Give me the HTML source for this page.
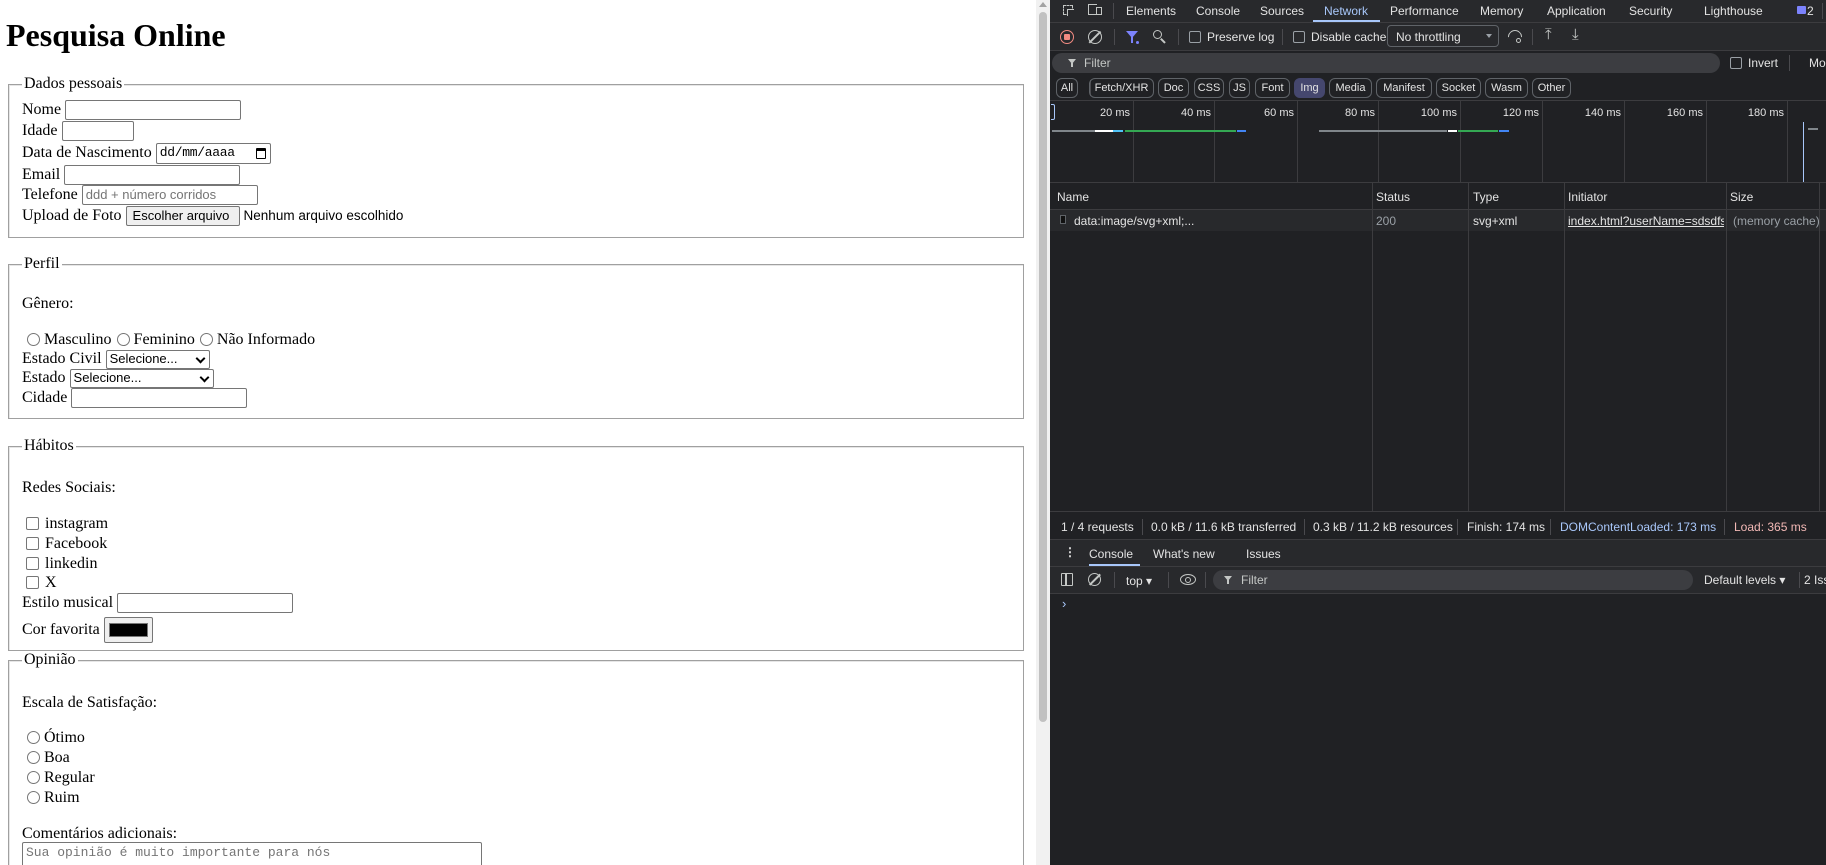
<!DOCTYPE html>
<html><head><meta charset="utf-8">
<style>
*{box-sizing:border-box}
html,body{margin:0;padding:0;width:1826px;height:865px;overflow:hidden;background:#fff}
.a{position:absolute}
#page{position:absolute;left:0;top:0;width:1036px;height:865px;background:#fff;font-family:"Liberation Serif",serif;font-size:16px;color:#000;overflow:hidden}
h1{position:absolute;left:6px;top:17px;margin:0;font-size:32px;font-weight:bold;line-height:37px}
.fs{position:absolute;left:8px;width:1016px;border:1px solid #a0a0a0;box-shadow:inset 1px 1px 0 #e6e6e6}
.lg{position:absolute;left:22px;background:#fff;padding:0 2px;line-height:18px;white-space:nowrap}
.row{position:absolute;left:22px;height:22px;display:flex;align-items:center;white-space:nowrap;line-height:18px;margin-top:1px}
.inp{display:inline-block;border:1px solid #767676;border-radius:2px;height:20px;margin-left:4px;background:#fff;font-family:"Liberation Sans",sans-serif;font-size:13px;color:#757575;padding:1px 3px;line-height:16px}
.btn{display:inline-block;border:1px solid #767676;border-radius:2px;background:#efefef;height:20px;font-family:"Liberation Sans",sans-serif;font-size:13px;color:#000;padding:1px 6px;line-height:16px;margin-left:4px}
.sel{display:inline-block;border:1px solid #767676;border-radius:2px;height:19px;margin-left:4px;font-family:"Liberation Sans",sans-serif;font-size:13px;color:#000;padding:0 3px;line-height:16px;position:relative}
.sel:after{content:"";position:absolute;right:5px;top:4px;width:5px;height:5px;border-right:2px solid #000;border-bottom:2px solid #000;transform:rotate(45deg)}
.rad{display:inline-block;width:13px;height:13px;border:1px solid #767676;border-radius:50%;margin:0 4px 0 5px;position:relative;top:-1px}
.chk{display:inline-block;width:13px;height:13px;border:1px solid #767676;border-radius:2px;margin:0 6px 0 4px;position:relative;top:-1px}
#dt{position:absolute;left:1050px;top:0;width:776px;height:865px;background:#202124;font-family:"Liberation Sans",sans-serif;font-size:12px;color:#e3e3e3;overflow:hidden}
#sb{position:absolute;left:1036px;top:0;width:14px;height:865px;background:#f1f1f1}
.t{position:absolute;white-space:nowrap;line-height:14px}
.hl{position:absolute;height:1px;background:#3c3c3f}
.vl{position:absolute;width:1px;background:#3c3c3f}
.chip{position:absolute;top:78px;height:20px;border:1px solid #5f6368;border-radius:6px;font-size:11px;line-height:18px;text-align:center;color:#e3e3e3}
.cb{position:absolute;width:12px;height:12px;border:1px solid #9aa0a6;border-radius:2px}
.sep{position:absolute;width:1px;height:16px;background:#4a4a4e}
</style></head><body>
<div id="page">
<h1>Pesquisa Online</h1>

<div class="fs" style="top:84px;height:154px"></div>
<div class="lg" style="top:75px">Dados pessoais</div>
<div class="row" style="top:98px">Nome<span class="inp" style="width:176px"></span></div>
<div class="row" style="top:119px">Idade<span class="inp" style="width:72px"></span></div>
<div class="row" style="top:141px">Data de Nascimento<span class="inp" style="width:115px;height:21px;color:#000;font-family:'Liberation Mono',monospace;font-size:13px;position:relative;letter-spacing:-0.3px">dd/mm/aaaa<span style="position:absolute;right:4px;top:4px;width:10px;height:11px;border:1.5px solid #000;border-top-width:3px;border-radius:1px"></span></span></div>
<div class="row" style="top:163px">Email<span class="inp" style="width:176px"></span></div>
<div class="row" style="top:183px">Telefone<span class="inp" style="width:176px">ddd + número corridos</span></div>
<div class="row" style="top:204px">Upload de Foto<span class="btn" style="width:114px">Escolher arquivo</span><span style="font-family:'Liberation Sans',sans-serif;font-size:13.5px;margin-left:4px">Nenhum arquivo escolhido</span></div>

<div class="fs" style="top:264px;height:155px"></div>
<div class="lg" style="top:255px">Perfil</div>
<div class="row" style="top:292px">Gênero:</div>
<div class="row" style="top:328px"><span class="rad" style="margin-left:5px"></span>Masculino<span class="rad"></span>Feminino<span class="rad"></span>Não Informado</div>
<div class="row" style="top:347px">Estado Civil<span class="sel" style="width:104px">Selecione...</span></div>
<div class="row" style="top:366px">Estado<span class="sel" style="width:144px">Selecione...</span></div>
<div class="row" style="top:386px">Cidade<span class="inp" style="width:176px"></span></div>

<div class="fs" style="top:446px;height:205px"></div>
<div class="lg" style="top:437px">Hábitos</div>
<div class="row" style="top:476px">Redes Sociais:</div>
<div class="row" style="top:512px"><span class="chk"></span>instagram</div>
<div class="row" style="top:532px"><span class="chk"></span>Facebook</div>
<div class="row" style="top:552px"><span class="chk"></span>linkedin</div>
<div class="row" style="top:571px"><span class="chk"></span>X</div>
<div class="row" style="top:591px">Estilo musical<span class="inp" style="width:176px"></span></div>
<div class="row" style="top:616px;height:26px">Cor favorita<span style="display:inline-block;margin-left:4px;width:49px;height:26px;border:1px solid #767676;border-radius:2px;background:#efefef;padding:5px 4px"><span style="display:block;height:14px;background:#000;border:1px solid #777"></span></span></div>

<div class="fs" style="top:660px;height:230px"></div>
<div class="lg" style="top:651px">Opinião</div>
<div class="row" style="top:691px">Escala de Satisfação:</div>
<div class="row" style="top:726px"><span class="rad"></span>Ótimo</div>
<div class="row" style="top:746px"><span class="rad"></span>Boa</div>
<div class="row" style="top:766px"><span class="rad"></span>Regular</div>
<div class="row" style="top:786px"><span class="rad"></span>Ruim</div>
<div class="row" style="top:822px">Comentários adicionais:</div>
<div class="a" style="left:22px;top:842px;width:460px;height:40px;border:1px solid #767676;border-radius:2px;font-family:'Liberation Mono',monospace;font-size:13px;color:#757575;padding:2px 3px">Sua opinião é muito importante para nós</div>
</div>

<div id="sb"><div class="a" style="left:3px;top:2px;width:0;height:0;border-left:4px solid transparent;border-right:4px solid transparent;border-bottom:5px solid #a3a3a3"></div><div class="a" style="left:3px;top:12px;width:8px;height:710px;background:#c1c1c1;border-radius:4px"></div></div>

<div id="dt">
<div class="a" style="left:0;top:0;width:776px;height:22px;background:#28292c"></div>
<div class="hl" style="left:0;top:22px;width:776px"></div>
<div class="a" style="left:13px;top:5px;width:10px;height:10px;border:1px dashed #c4c7c5"></div>
<div class="a" style="left:17px;top:9px;width:7px;height:7px;border-left:1.5px solid #c4c7c5;border-top:1.5px solid #c4c7c5;background:#28292c"></div>
<div class="a" style="left:38px;top:4px;width:9px;height:11px;border:1.5px solid #c4c7c5;border-right:none"></div>
<div class="a" style="left:46px;top:7px;width:6px;height:8px;border:1.5px solid #c4c7c5"></div>
<div class="sep" style="left:63px;top:3px"></div>
<div class="t" style="left:76px;top:4px">Elements</div>
<div class="t" style="left:146px;top:4px">Console</div>
<div class="t" style="left:210px;top:4px">Sources</div>
<div class="t" style="left:274px;top:4px;color:#a8c7fa">Network</div>
<div class="a" style="left:263px;top:20px;width:67px;height:2px;background:#a8c7fa"></div>
<div class="t" style="left:340px;top:4px">Performance</div>
<div class="t" style="left:430px;top:4px">Memory</div>
<div class="t" style="left:497px;top:4px">Application</div>
<div class="t" style="left:579px;top:4px">Security</div>
<div class="t" style="left:654px;top:4px">Lighthouse</div>
<div class="a" style="left:747px;top:6px;width:9px;height:8px;background:#7c83fd;border-radius:1px"></div>
<div class="t" style="left:757px;top:4px">2</div>
<div class="sep" style="left:772px;top:3px"></div>
<div class="a" style="left:0;top:23px;width:776px;height:28px;background:#28292c"></div>
<div class="hl" style="left:0;top:50px;width:776px"></div>
<div class="a" style="left:10px;top:30px;width:14px;height:14px;border:1.5px solid #f28b82;border-radius:50%"></div>
<div class="a" style="left:14px;top:34px;width:6px;height:6px;background:#f28b82;border-radius:1px"></div>
<div class="a" style="left:38px;top:30px;width:14px;height:14px;border:1.5px solid #c4c7c5;border-radius:50%"></div>
<div class="a" style="left:44px;top:29px;width:1.5px;height:16px;background:#c4c7c5;transform:rotate(45deg)"></div>
<div class="sep" style="left:64px;top:29px"></div>
<div class="a" style="left:76px;top:31px;width:0;height:0;border-left:6px solid transparent;border-right:6px solid transparent;border-top:7px solid #7c83fd"></div>
<div class="a" style="left:81px;top:37px;width:2px;height:6px;background:#7c83fd"></div>
<div class="a" style="left:86px;top:41px;width:3px;height:3px;background:#7c83fd;border-radius:50%"></div>
<div class="a" style="left:103px;top:30px;width:9px;height:9px;border:1.5px solid #c4c7c5;border-radius:50%"></div>
<div class="a" style="left:112px;top:38px;width:1.5px;height:6px;background:#c4c7c5;transform:rotate(-45deg)"></div>
<div class="sep" style="left:128px;top:29px"></div>
<div class="cb" style="left:139px;top:31px"></div>
<div class="t" style="left:157px;top:30px">Preserve log</div>
<div class="sep" style="left:232px;top:29px"></div>
<div class="cb" style="left:243px;top:31px"></div>
<div class="t" style="left:261px;top:30px">Disable cache</div>
<div class="a" style="left:337px;top:25px;width:112px;height:22px;border:1px solid #5f6368;border-radius:4px"></div>
<div class="t" style="left:346px;top:30px">No throttling</div>
<div class="a" style="left:436px;top:34px;border-left:3.5px solid transparent;border-right:3.5px solid transparent;border-top:4px solid #9aa0a6"></div>
<div class="a" style="left:458px;top:30px;width:14px;height:14px;border:1.5px solid #c4c7c5;border-radius:50%;border-bottom-color:transparent;border-left-color:transparent;transform:rotate(-45deg)"></div>
<div class="a" style="left:466px;top:38px;width:5px;height:5px;border:1.5px solid #c4c7c5;border-radius:50%"></div>
<div class="sep" style="left:482px;top:29px"></div>
<div class="t" style="left:495px;top:28px;font-size:15px;color:#c4c7c5">⤒</div>
<div class="t" style="left:522px;top:28px;font-size:15px;color:#c4c7c5">⤓</div>
<div class="a" style="left:2px;top:53px;width:668px;height:20px;background:#3c3d41;border-radius:10px"></div>
<div class="a" style="left:18px;top:59px;border-left:4px solid transparent;border-right:4px solid transparent;border-top:5px solid #c4c7c5"></div>
<div class="a" style="left:21px;top:63px;width:1.5px;height:4px;background:#c4c7c5"></div>
<div class="t" style="left:34px;top:56px;color:#c4c7c5">Filter</div>
<div class="cb" style="left:680px;top:57px"></div>
<div class="t" style="left:698px;top:56px">Invert</div>
<div class="sep" style="left:739px;top:55px"></div>
<div class="t" style="left:759px;top:56px">Mo</div>
<div class="chip" style="left:6px;width:22px">All</div>
<div class="sep" style="left:40px;top:80px"></div>
<div class="chip" style="left:39px;width:65px">Fetch/XHR</div>
<div class="chip" style="left:108px;width:31px">Doc</div>
<div class="chip" style="left:144px;width:30px">CSS</div>
<div class="chip" style="left:179px;width:21px">JS</div>
<div class="chip" style="left:205px;width:35px">Font</div>
<div class="chip" style="left:244px;width:31px;background:#45476e;border-color:#45476e">Img</div>
<div class="chip" style="left:279px;width:43px">Media</div>
<div class="chip" style="left:326px;width:56px">Manifest</div>
<div class="chip" style="left:386px;width:45px">Socket</div>
<div class="chip" style="left:435px;width:43px">Wasm</div>
<div class="chip" style="left:482px;width:39px">Other</div>
<div class="hl" style="left:0;top:100px;width:776px"></div>
<div class="vl" style="left:83px;top:101px;height:81px"></div>
<div class="vl" style="left:164px;top:101px;height:81px"></div>
<div class="vl" style="left:247px;top:101px;height:81px"></div>
<div class="vl" style="left:328px;top:101px;height:81px"></div>
<div class="vl" style="left:410px;top:101px;height:81px"></div>
<div class="vl" style="left:492px;top:101px;height:81px"></div>
<div class="vl" style="left:574px;top:101px;height:81px"></div>
<div class="vl" style="left:656px;top:101px;height:81px"></div>
<div class="vl" style="left:737px;top:101px;height:81px"></div>
<div class="a" style="left:1px;top:104px;width:4px;height:16px;border:1px solid #a8c7fa;border-left:none;border-radius:0 2px 2px 0"></div>
<div class="t" style="left:40px;top:106px;width:40px;text-align:right;font-size:11px">20 ms</div>
<div class="t" style="left:121px;top:106px;width:40px;text-align:right;font-size:11px">40 ms</div>
<div class="t" style="left:204px;top:106px;width:40px;text-align:right;font-size:11px">60 ms</div>
<div class="t" style="left:285px;top:106px;width:40px;text-align:right;font-size:11px">80 ms</div>
<div class="t" style="left:362px;top:106px;width:45px;text-align:right;font-size:11px">100 ms</div>
<div class="t" style="left:444px;top:106px;width:45px;text-align:right;font-size:11px">120 ms</div>
<div class="t" style="left:526px;top:106px;width:45px;text-align:right;font-size:11px">140 ms</div>
<div class="t" style="left:608px;top:106px;width:45px;text-align:right;font-size:11px">160 ms</div>
<div class="t" style="left:689px;top:106px;width:45px;text-align:right;font-size:11px">180 ms</div>
<div class="a" style="left:2px;top:130px;width:43px;height:2px;background:#80868b"></div>
<div class="a" style="left:45px;top:130px;width:18px;height:2px;background:#fff"></div>
<div class="a" style="left:63px;top:130px;width:10px;height:2px;background:#4fc3f7"></div>
<div class="a" style="left:75px;top:130px;width:111px;height:2px;background:#34a853"></div>
<div class="a" style="left:187px;top:130px;width:9px;height:2px;background:#4285f4"></div>
<div class="a" style="left:269px;top:130px;width:128px;height:2px;background:#80868b"></div>
<div class="a" style="left:398px;top:130px;width:9px;height:2px;background:#fff"></div>
<div class="a" style="left:408px;top:130px;width:40px;height:2px;background:#34a853"></div>
<div class="a" style="left:449px;top:130px;width:10px;height:2px;background:#4285f4"></div>
<div class="a" style="left:753px;top:122px;width:1px;height:60px;background:#a8c7fa"></div>
<div class="a" style="left:758px;top:128px;width:10px;height:1.5px;background:#80868b"></div>
<div class="hl" style="left:0;top:182px;width:776px"></div>
<div class="vl" style="left:322px;top:182px;height:330px"></div>
<div class="vl" style="left:418px;top:182px;height:330px"></div>
<div class="vl" style="left:514px;top:182px;height:330px"></div>
<div class="vl" style="left:676px;top:182px;height:330px"></div>
<div class="vl" style="left:769px;top:182px;height:330px"></div>
<div class="t" style="left:7px;top:190px">Name</div>
<div class="t" style="left:326px;top:190px">Status</div>
<div class="t" style="left:423px;top:190px">Type</div>
<div class="t" style="left:518px;top:190px">Initiator</div>
<div class="t" style="left:680px;top:190px">Size</div>
<div class="hl" style="left:0;top:209px;width:776px"></div>
<div class="a" style="left:0;top:210px;width:776px;height:21px;background:#28292c"></div>
<div class="vl" style="left:322px;top:210px;height:21px"></div>
<div class="vl" style="left:418px;top:210px;height:21px"></div>
<div class="vl" style="left:514px;top:210px;height:21px"></div>
<div class="vl" style="left:676px;top:210px;height:21px"></div>
<div class="vl" style="left:769px;top:210px;height:21px"></div>
<div class="a" style="left:10px;top:215px;width:6px;height:9px;border:1px solid #5f6368;background:#111"></div>
<div class="t" style="left:24px;top:214px">data:image/svg+xml;...</div>
<div class="t" style="left:326px;top:214px;color:#9aa0a6">200</div>
<div class="t" style="left:423px;top:214px">svg+xml</div>
<div class="t" style="left:518px;top:214px;width:156px;overflow:hidden;text-decoration:underline">index.html?userName=sdsdfs</div>
<div class="t" style="left:683px;top:214px;color:#9aa0a6">(memory cache)</div>
<div class="hl" style="left:0;top:511px;width:776px"></div>
<div class="a" style="left:0;top:512px;width:776px;height:28px;background:#202124"></div>
<div class="t" style="left:11px;top:520px">1 / 4 requests</div>
<div class="sep" style="left:92px;top:519px"></div>
<div class="t" style="left:101px;top:520px">0.0 kB / 11.6 kB transferred</div>
<div class="sep" style="left:254px;top:519px"></div>
<div class="t" style="left:263px;top:520px">0.3 kB / 11.2 kB resources</div>
<div class="sep" style="left:407px;top:519px"></div>
<div class="t" style="left:417px;top:520px">Finish: 174 ms</div>
<div class="sep" style="left:500px;top:519px"></div>
<div class="t" style="left:510px;top:520px;color:#a8c7fa">DOMContentLoaded: 173 ms</div>
<div class="sep" style="left:674px;top:519px"></div>
<div class="t" style="left:684px;top:520px;color:#f2b8b5">Load: 365 ms</div>
<div class="hl" style="left:0;top:539px;width:776px"></div>
<div class="a" style="left:0;top:540px;width:776px;height:27px;background:#28292c"></div>
<div class="t" style="left:14px;top:545px;font-weight:bold">⋮</div>
<div class="t" style="left:39px;top:547px;color:#e3e3e3">Console</div>
<div class="a" style="left:39px;top:564px;width:51px;height:2px;background:#a8c7fa"></div>
<div class="t" style="left:103px;top:547px">What's new</div>
<div class="t" style="left:196px;top:547px">Issues</div>
<div class="hl" style="left:0;top:566px;width:776px"></div>
<div class="a" style="left:0;top:567px;width:776px;height:26px;background:#28292c"></div>
<div class="a" style="left:11px;top:573px;width:12px;height:13px;border:1.5px solid #c4c7c5;border-radius:1px"></div>
<div class="a" style="left:15px;top:573px;width:1.5px;height:13px;background:#c4c7c5"></div>
<div class="a" style="left:38px;top:573px;width:13px;height:13px;border:1.5px solid #c4c7c5;border-radius:50%"></div>
<div class="a" style="left:44px;top:572px;width:1.5px;height:15px;background:#c4c7c5;transform:rotate(45deg)"></div>
<div class="sep" style="left:64px;top:572px"></div>
<div class="t" style="left:76px;top:574px">top ▾</div>
<div class="sep" style="left:118px;top:572px"></div>
<div class="a" style="left:130px;top:574px;width:16px;height:11px;border:1.5px solid #c4c7c5;border-radius:50%"></div>
<div class="a" style="left:135px;top:577px;width:6px;height:6px;border:1.5px solid #c4c7c5;border-radius:50%"></div>
<div class="sep" style="left:155px;top:572px"></div>
<div class="a" style="left:163px;top:570px;width:480px;height:20px;background:#3c3d41;border-radius:10px"></div>
<div class="a" style="left:174px;top:576px;border-left:4px solid transparent;border-right:4px solid transparent;border-top:5px solid #c4c7c5"></div>
<div class="a" style="left:177px;top:580px;width:1.5px;height:4px;background:#c4c7c5"></div>
<div class="t" style="left:191px;top:573px;color:#c4c7c5">Filter</div>
<div class="t" style="left:654px;top:573px">Default levels ▾</div>
<div class="sep" style="left:749px;top:572px"></div>
<div class="t" style="left:754px;top:573px">2 Iss</div>
<div class="hl" style="left:0;top:593px;width:776px"></div>
<div class="t" style="left:12px;top:597px;color:#a8c7fa;font-size:13px">›</div>
</div>
</body></html>
